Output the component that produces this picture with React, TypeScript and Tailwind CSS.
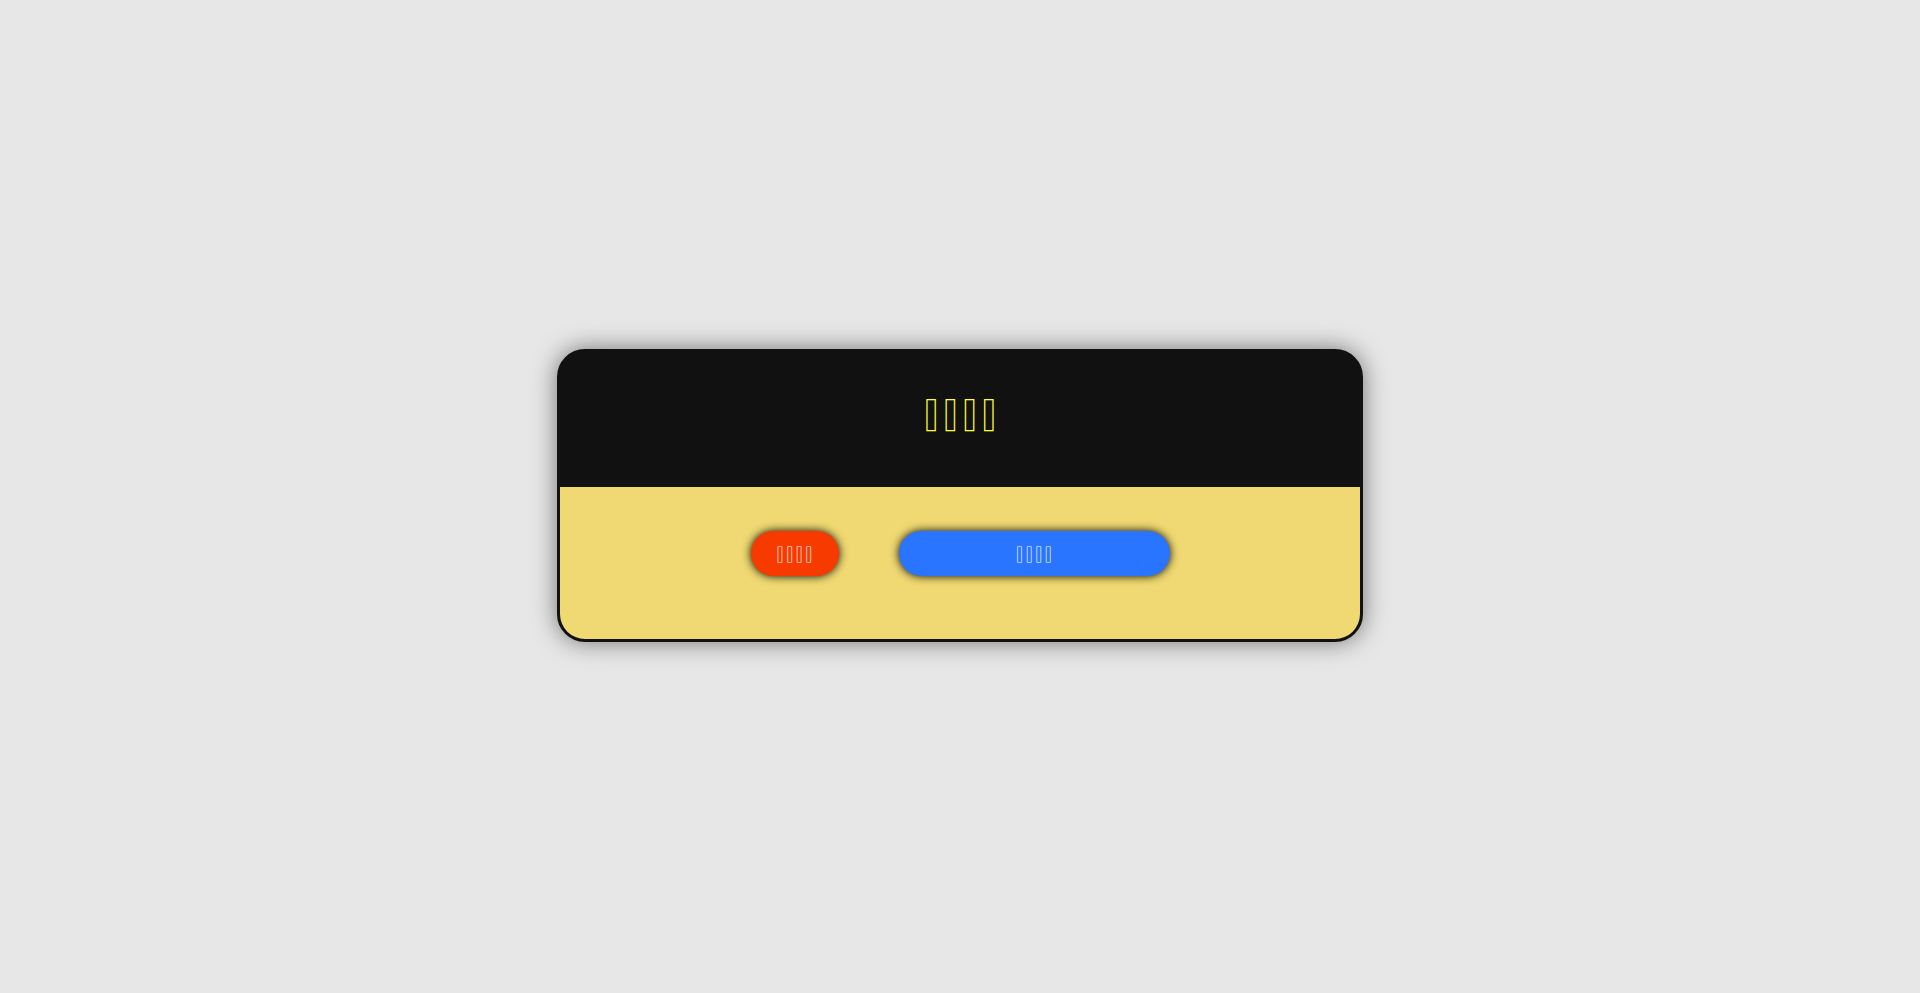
const App = () => {
  return (
    <main className="flex min-h-screen items-center justify-center bg-[#e7e7e7] pb-0.5 font-['Noto_Sans_Mono','DejaVu_Sans_Mono',monospace]">
      {/* Card */}
      <section className="w-full max-w-[806px] rounded-[28px] border-3 border-[#111111] bg-[#111111] shadow-[0_0_25px_rgba(0,0,0,0.5)]">
        <header className="flex h-[135px] items-center justify-center pb-5">
          <h1 className="text-[32px] leading-10 text-[#ffff33]">▯▯▯▯</h1>
        </header>

        {/* Actions */}
        <div className="flex justify-center gap-[60px] rounded-b-[25px] bg-[#f0d972] px-6 pt-11 pb-[63px]">
          <button
            type="button"
            className="h-[45px] w-[88px] rounded-3xl bg-[#f73b00] pb-1 text-base text-white shadow-[0_0_10px_#000000]"
          >
            ▯▯▯▯
          </button>
          <button
            type="button"
            className="h-[45px] w-[271px] rounded-3xl bg-[#2975ff] pb-1 text-base text-white shadow-[0_0_10px_#000000]"
          >
            ▯▯▯▯
          </button>
        </div>
      </section>
    </main>
  );
};

export default App;
